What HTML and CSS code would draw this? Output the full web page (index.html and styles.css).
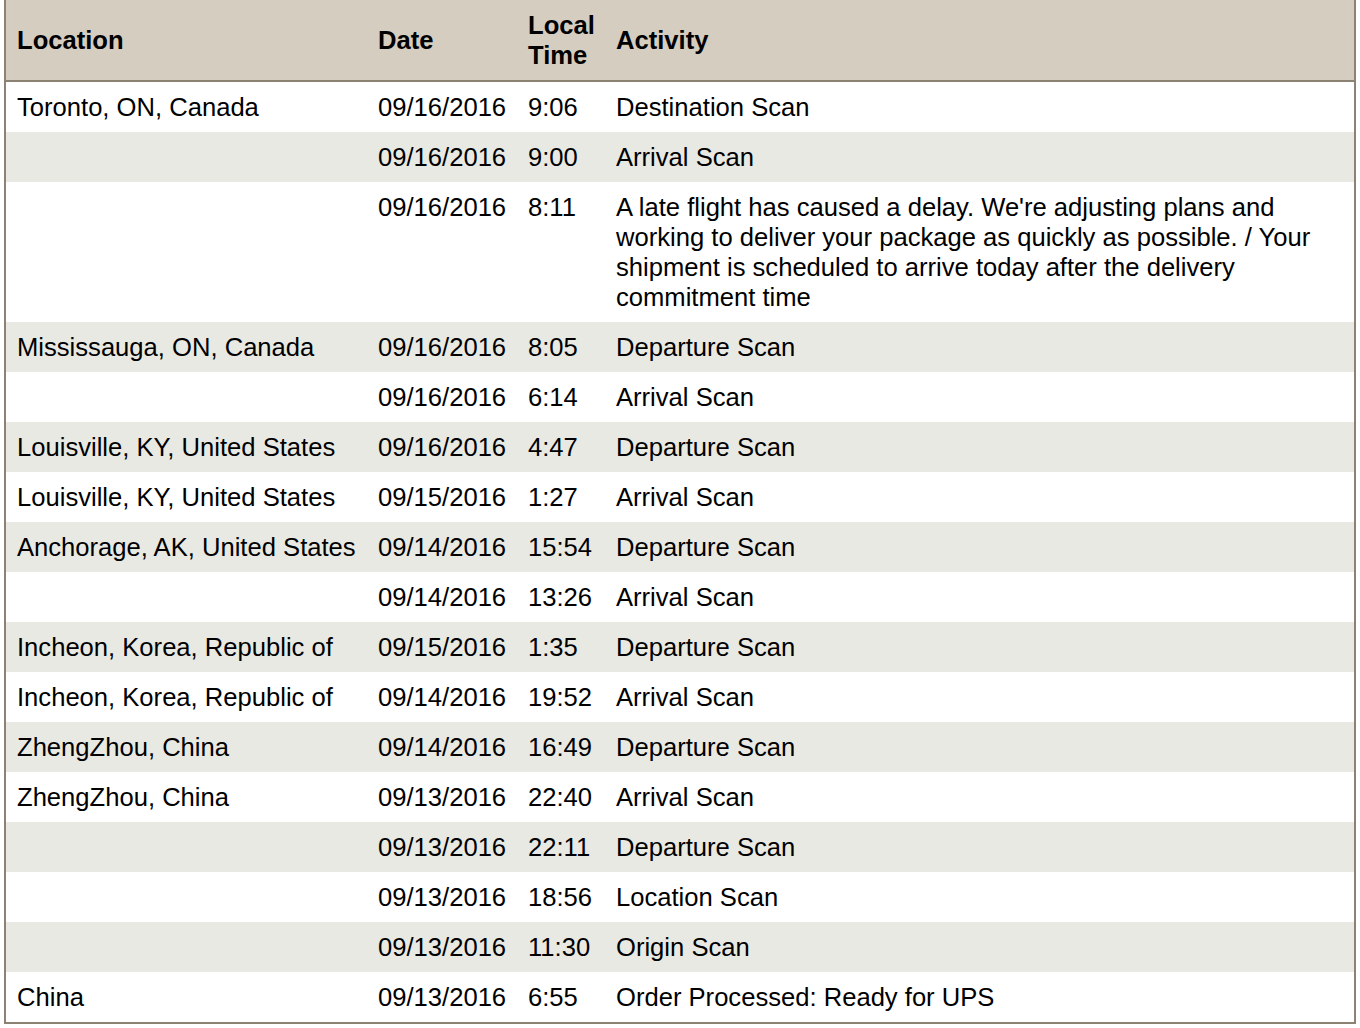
FILE: index.html
```html
<!DOCTYPE html>
<html lang="en">
<head>
    <meta charset="UTF-8">
    <title>Shipment Progress</title>
    <link rel="stylesheet" href="styles.css">
</head>
<body>

<table class="progress">
    <colgroup>
        <col class="col-location">
        <col class="col-date">
        <col class="col-time">
        <col class="col-activity">
    </colgroup>
    <thead>
        <tr>
            <th>Location</th>
            <th>Date</th>
            <th>Local Time</th>
            <th>Activity</th>
        </tr>
    </thead>
    <tbody>
        <tr><td>Toronto, ON, Canada</td><td>09/16/2016</td><td>9:06</td><td>Destination Scan</td></tr>
        <tr><td></td><td>09/16/2016</td><td>9:00</td><td>Arrival Scan</td></tr>
        <tr><td></td><td>09/16/2016</td><td>8:11</td><td>A late flight has caused a delay. We're adjusting plans and working to deliver your package as quickly as possible. / Your shipment is scheduled to arrive today after the delivery commitment time</td></tr>
        <tr><td>Mississauga, ON, Canada</td><td>09/16/2016</td><td>8:05</td><td>Departure Scan</td></tr>
        <tr><td></td><td>09/16/2016</td><td>6:14</td><td>Arrival Scan</td></tr>
        <tr><td>Louisville, KY, United States</td><td>09/16/2016</td><td>4:47</td><td>Departure Scan</td></tr>
        <tr><td>Louisville, KY, United States</td><td>09/15/2016</td><td>1:27</td><td>Arrival Scan</td></tr>
        <tr><td>Anchorage, AK, United States</td><td>09/14/2016</td><td>15:54</td><td>Departure Scan</td></tr>
        <tr><td></td><td>09/14/2016</td><td>13:26</td><td>Arrival Scan</td></tr>
        <tr><td>Incheon, Korea, Republic of</td><td>09/15/2016</td><td>1:35</td><td>Departure Scan</td></tr>
        <tr><td>Incheon, Korea, Republic of</td><td>09/14/2016</td><td>19:52</td><td>Arrival Scan</td></tr>
        <tr><td>ZhengZhou, China</td><td>09/14/2016</td><td>16:49</td><td>Departure Scan</td></tr>
        <tr><td>ZhengZhou, China</td><td>09/13/2016</td><td>22:40</td><td>Arrival Scan</td></tr>
        <tr><td></td><td>09/13/2016</td><td>22:11</td><td>Departure Scan</td></tr>
        <tr><td></td><td>09/13/2016</td><td>18:56</td><td>Location Scan</td></tr>
        <tr><td></td><td>09/13/2016</td><td>11:30</td><td>Origin Scan</td></tr>
        <tr><td>China</td><td>09/13/2016</td><td>6:55</td><td>Order Processed: Ready for UPS</td></tr>
    </tbody>
</table>

</body>
</html>
```

FILE: styles.css
```css
body {
    margin: 0 4px;
    font-family: "Liberation Sans", Arial, Helvetica, sans-serif;
    font-size: 25.6px;
    line-height: 30px;
    color: #000;
    background: #fff;
}
.progress {
    width: 100%;
    table-layout: fixed;
    border-collapse: separate;
    border-spacing: 0;
    border: 2px solid #8c8273;
    border-top: none;
}
.col-location {
    width: 361px;
}
.col-date {
    width: 150px;
}
.col-time {
    width: 88px;
}
.progress th {
    background-color: #d5cdc0;
    border-bottom: 2px solid #8c8273;
    text-align: left;
    font-weight: bold;
    vertical-align: middle;
    padding: 10px 7px 10px 11px;
}
.progress td {
    vertical-align: top;
    padding: 10px 7px 10px 11px;
    height: 30px;
}
.progress tbody tr:nth-child(even) td {
    background-color: #e9e9e4;
}
```
